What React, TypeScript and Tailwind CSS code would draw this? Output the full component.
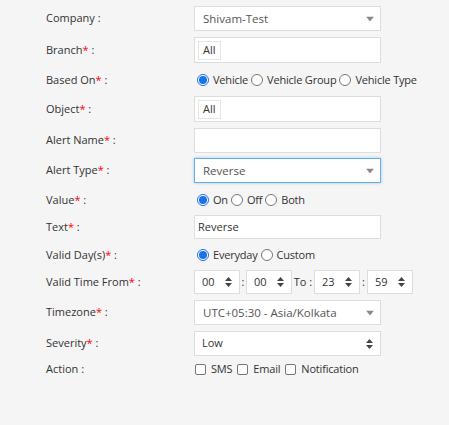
import React from "react";

const font = { fontFamily: '"Open Sans", "Noto Sans", sans-serif' };

const Req = () => <span className="text-[#ff0000]">*</span>;

const Label = ({ text, req }: { text: string; req?: boolean }) => (
  <div className="w-[148px] shrink-0 text-[11px] text-[#333]">
    {text}
    {req && <Req />} :
  </div>
);

const Caret = () => (
  <svg width="8" height="5" viewBox="0 0 8 5" className="absolute right-[6px] top-1/2 -translate-y-1/2">
    <path d="M0 0 L8 0 L4 5 Z" fill="#888" />
  </svg>
);

const UpDown = () => (
  <svg width="7" height="11" viewBox="0 0 7 11" className="absolute right-[7px] top-1/2 -translate-y-1/2">
    <path d="M3.5 0.5 L7 4.5 L0 4.5 Z" fill="#444" />
    <path d="M0 6.5 L7 6.5 L3.5 10.5 Z" fill="#444" />
  </svg>
);

const Radio = ({ checked, label }: { checked?: boolean; label: string }) => (
  <span className="flex items-center">
    {checked ? (
      <span className="w-[12px] h-[12px] rounded-full border border-[#1a73e8] bg-white flex items-center justify-center">
        <span className="w-[8px] h-[8px] rounded-full bg-[#1a73e8]" />
      </span>
    ) : (
      <span className="w-[12px] h-[12px] rounded-full border border-[#767676] bg-white" />
    )}
    <span className="ml-[4px] mr-[3px] text-[11px] tracking-[-0.2px] text-[#333]">{label}</span>
  </span>
);

const Check = ({ label }: { label: string }) => (
  <span className="flex items-center mr-[5px]">
    <span className="w-[11px] h-[11px] rounded-[2px] border border-[#767676] bg-white" />
    <span className="ml-[5px] text-[11px] tracking-[-0.2px] text-[#333]">{label}</span>
  </span>
);

const Box = ({ children, h = "h-[25px]", cls = "border-[#ddd]" }: { children?: React.ReactNode; h?: string; cls?: string }) => (
  <div className={`relative w-[187px] ${h} bg-white border ${cls} flex items-center`}>{children}</div>
);

const TimeBox = ({ v }: { v: string }) => (
  <div className="relative w-[46px] h-[24px] bg-white border border-[#ddd] flex items-center pl-[7px] text-[11px] text-[#333]">
    {v}
    <UpDown />
  </div>
);

const Chip = () => (
  <span className="ml-[3px] h-[19px] px-[4px] border border-[#e5e5e5] bg-white flex items-center text-[11px] text-[#333]">All</span>
);

export default function App() {
  return (
    <div className="w-[449px] h-[425px] bg-[#f5f5f5] pl-[46px] pt-[6px]" style={font}>
      <div className="flex items-center">
        <Label text="Company" />
        <Box>
          <span className="pl-[8px] text-[11.5px] text-[#555]">Shivam-Test</span>
          <Caret />
        </Box>
      </div>
      <div className="flex items-center mt-[6px]">
        <Label text="Branch" req />
        <Box h="h-[26px]">
          <Chip />
        </Box>
      </div>
      <div className="flex items-center mt-[7px] h-[20px]">
        <Label text="Based On" req />
        <div className="flex items-center pl-[3px]">
          <Radio checked label="Vehicle" />
          <Radio label="Vehicle Group" />
          <Radio label="Vehicle Type" />
        </div>
      </div>
      <div className="flex items-center mt-[6px]">
        <Label text="Object" req />
        <Box h="h-[26px]">
          <Chip />
        </Box>
      </div>
      <div className="flex items-center mt-[6px]">
        <Label text="Alert Name" req />
        <Box />
      </div>
      <div className="flex items-center mt-[5px]">
        <Label text="Alert Type" req />
        <Box cls="border-[#66afe9] shadow-[0_0_3px_rgba(102,175,233,0.6)]">
          <span className="pl-[8px] text-[11.5px] text-[#555]">Reverse</span>
          <Caret />
        </Box>
      </div>
      <div className="flex items-center mt-[7px] h-[20px]">
        <Label text="Value" req />
        <div className="flex items-center pl-[3px]">
          <Radio checked label="On" />
          <Radio label="Off" />
          <Radio label="Both" />
        </div>
      </div>
      <div className="flex items-center mt-[5px]">
        <Label text="Text" req />
        <Box h="h-[24px]">
          <span className="pl-[3px] text-[11px] text-[#333]">Reverse</span>
        </Box>
      </div>
      <div className="flex items-center mt-[6px] h-[20px]">
        <Label text="Valid Day(s)" req />
        <div className="flex items-center pl-[3px]">
          <Radio checked label="Everyday" />
          <Radio label="Custom" />
        </div>
      </div>
      <div className="flex items-center mt-[5px]">
        <Label text="Valid Time From" req />
        <div className="flex items-center text-[11px] text-[#333]">
          <TimeBox v="00" />
          <span className="w-[6px] text-center">:</span>
          <TimeBox v="00" />
          <span className="w-[22px] text-center">To :</span>
          <TimeBox v="23" />
          <span className="w-[7px] text-center">:</span>
          <TimeBox v="59" />
        </div>
      </div>
      <div className="flex items-center mt-[6px]">
        <Label text="Timezone" req />
        <Box>
          <span className="pl-[8px] text-[11.5px] text-[#555]">UTC+05:30 - Asia/Kolkata</span>
          <Caret />
        </Box>
      </div>
      <div className="flex items-center mt-[6px]">
        <Label text="Severity" req />
        <Box>
          <span className="pl-[7px] text-[11px] text-[#333]">Low</span>
          <UpDown />
        </Box>
      </div>
      <div className="flex items-center mt-[3px] h-[20px]">
        <Label text="Action" />
        <div className="flex items-center pl-[1px]">
          <Check label="SMS" />
          <Check label="Email" />
          <Check label="Notification" />
        </div>
      </div>
    </div>
  );
}
